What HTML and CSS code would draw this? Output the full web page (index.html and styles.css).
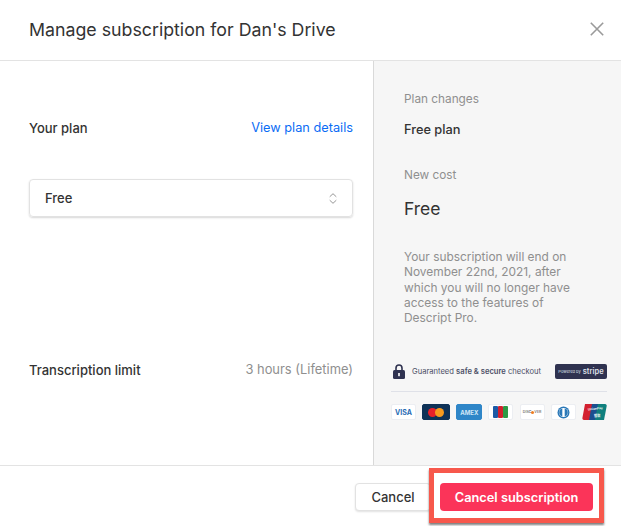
FILE: index.html
```html
<!DOCTYPE html>
<html lang="en">
<head>
<meta charset="utf-8">
<title>Manage subscription</title>
<link rel="stylesheet" href="styles.css">
</head>
<body>
<div class="modal">
  <header class="head">
    <h1 class="title">Manage subscription for Dan's Drive</h1>
    <svg class="close" width="14" height="14" viewBox="0 0 14 14"><path d="M.8.8l12.4 12.4M13.2.8L.8 13.2" stroke="#9a9a9a" stroke-width="1.6" fill="none"/></svg>
  </header>
  <main class="body">
    <section class="left">
      <div class="row plan-row"><span class="label">Your plan</span><a class="link">View plan details</a></div>
      <div class="select"><span>Free</span>
        <svg width="8" height="11" viewBox="0 0 8 11"><path d="M.7 3.8L4 .7l3.3 3.1M.7 7.2L4 10.3l3.3-3.1" stroke="#8a8a8a" stroke-width=".9" fill="none"/></svg>
      </div>
      <div class="row limit-row"><span class="label">Transcription limit</span><span class="muted">3 hours (Lifetime)</span></div>
    </section>
    <aside class="side">
      <div class="cap">Plan changes</div>
      <div class="plan">Free plan</div>
      <div class="cap cost-cap">New cost</div>
      <div class="cost">Free</div>
      <p class="note">Your subscription will end on November 22nd, 2021, after which you will no longer have access to the features of Descript Pro.</p>
      <div class="secure">
        <svg class="lock" width="12" height="15" viewBox="0 0 12 15"><path d="M3 7V4a3 3 0 0 1 6 0v3" stroke="#2f3250" stroke-width="1.6" fill="none"/><rect y="6" width="12" height="9" rx="1.5" fill="#2f3250"/><rect x="5.2" y="9" width="1.6" height="3.2" fill="#fff"/></svg>
        <span class="guarantee">Guaranteed <b>safe &amp; secure</b> checkout</span>
        <span class="stripe"><small>Powered by</small> <b>stripe</b></span>
      </div>
      <div class="cards">
        <span class="card visa">VISA</span>
        <span class="card mc"><i class="d1"></i><i class="d2"></i></span>
        <span class="card amex">AMEX</span>
        <span class="card jcb"><i></i><i></i><i></i></span>
        <span class="card disc">DISC<em></em>VER</span>
        <span class="card diners"><svg width="15" height="13" viewBox="0 0 15 13"><circle cx="7.5" cy="6.5" r="6" fill="#2a78b8"/><circle cx="7.5" cy="6.5" r="4.6" fill="#fff"/><path d="M6.3 2.6a4 4 0 0 0 0 7.8zM8.7 2.6a4 4 0 0 1 0 7.8z" fill="#2a78b8"/></svg></span>
        <span class="card union"><svg width="25" height="16" viewBox="0 0 25 16"><path d="M3 0h9L9 16H1.5Q0 16 .3 14.500z" fill="#d3202f"/><path d="M10 0h8l-3 16H7z" fill="#1c4f8f"/><path d="M16 0h8q1 0 .8 1.500L22 16h-9z" fill="#10807e"/><text x="6" y="6.500" class="union-text" transform="rotate(-6 6 6)">UnionPay</text><text x="12" y="12.500" class="union-text">银联</text></svg></span>
      </div>
    </aside>
  </main>
  <footer class="foot">
    <button class="btn">Cancel</button>
    <div class="highlight"><button class="btn danger">Cancel subscription</button></div>
  </footer>
</div>
</body>
</html>
```
FILE: styles.css
```css
* { box-sizing: border-box; }
html, body { margin: 0; height: 100%; }
body { background: #fff; font-family: Inter, "Liberation Sans", sans-serif; color: #333; overflow: hidden; }
.modal { width: 621px; height: 526px; display: flex; flex-direction: column; }
.head { height: 61px; flex: none; display: flex; align-items: center; justify-content: space-between; padding: 0 17px 2px 29px; border-bottom: 1px solid #e3e3e3; }
.title { margin: 0; font-size: 17.75px; font-weight: 400; color: #333; }
.body { flex: none; height: 404px; display: flex; }
.left { width: 373px; padding: 0 20px 0 29px; }
.row { display: flex; justify-content: space-between; align-items: center; font-size: 13px; line-height: 16px; }
.plan-row { margin-top: 59px; }
.label { font-weight: 500; }
.link { color: #0a6cf5; font-size: 12.75px; }
.muted { color: #8f8f8f; font-size: 12.9px; }
.select { margin-top: 43px; height: 38px; display: flex; align-items: center; justify-content: space-between; padding: 0 15px; border: 1px solid #e2e2e2; border-radius: 4px; box-shadow: 0 1px 2px rgba(0,0,0,.16); font-size: 13px; font-weight: 500; }
.limit-row { margin-top: 145px; }
.side { width: 248px; background: #f6f6f6; border-left: 1px solid #d9d9d9; padding: 31px 14px 0 30px; }
.cap { font-size: 11.8px; line-height: 15px; color: #8f8f8f; }
.plan { margin-top: 15px; font-size: 12.8px; line-height: 15px; font-weight: 500; }
.cost-cap { margin-top: 31px; }
.cost { margin-top: 15px; font-size: 17.5px; line-height: 22px; }
.note { margin: 29px 0 0; font-size: 11.9px; line-height: 15.25px; color: #8f8f8f; width: 185px; }
.secure { margin: 34px 0 0 -13px; height: 24px; display: flex; align-items: center; gap: 7px; }
.lock { margin-left: 2px; }
.guarantee { font-size: 7.6px; color: #4c4f66; white-space: nowrap; flex: 1; }
.guarantee b { font-weight: 600; }
.stripe { background: #2f3250; color: #dfe0ea; border-radius: 2px; width: 52px; height: 15px; display: flex; align-items: center; justify-content: center; gap: 2px; white-space: nowrap; }
.stripe small { font-size: 4px; }
.stripe b { font-size: 7.5px; font-weight: 600; }
.cards { margin: 8px 0 0 -13px; padding-top: 12px; border-top: 1px solid #dfe1e8; display: flex; justify-content: space-between; }
.card { width: 25px; height: 16px; border-radius: 2px; background: #fff; border: 1px solid #eceef2; display: flex; align-items: center; justify-content: center; font-weight: 700; overflow: hidden; }
.visa { color: #2a6db5; font-size: 7px; }
.mc { width: 28px; background: #0e3257; border-color: #0e3257; }
.mc i { width: 9px; height: 9px; border-radius: 50%; display: block; }
.d1 { background: #e8202a; }
.d2 { background: #f79a1e; margin-left: -2px; }
.amex { width: 26px; background: #2f86c8; border-color: #2f86c8; color: #cfe6f6; font-size: 6px; }
.jcb i { width: 5px; height: 12px; display: block; background: #1c5aa6; border-radius: 1px; }
.jcb i:nth-child(2) { background: #d3202f; }
.jcb i:nth-child(3) { background: #2d9a46; }
.disc { font-size: 3.6px; color: #555; font-weight: 500; }
.disc em { width: 3px; height: 3px; border-radius: 50%; background: #ef7d22; display: block; }
.union { border: 0; background: none; }
.union-text { font-size: 3.2px; fill: #fff; font-family: "Liberation Sans", "Noto Sans CJK SC", sans-serif; }
.foot { flex: 1; border-top: 1px solid #e3e3e3; display: flex; justify-content: flex-end; align-items: flex-start; padding: 2px 17px 0 0; }
.btn { margin-top: 15px; height: 28px; width: 76px; padding: 0; border: 1px solid #e2e2e2; border-radius: 4px; background: #fff; box-shadow: 0 1px 2px rgba(0,0,0,.12); font: 500 13px Inter, "Liberation Sans", sans-serif; color: #333; }
.highlight { width: 175px; height: 55px; margin-left: -2px; padding: 10px 0 0 6px; border: 5px solid #f7584c; box-shadow: 0 2px 2px rgba(0,0,0,.5); background: #fff; }
.danger { margin: 0; width: 153px; padding: 0; border: 0; background: #fb3459; color: #fff; box-shadow: none; font-weight: 600; font-size: 12.8px; }
```
